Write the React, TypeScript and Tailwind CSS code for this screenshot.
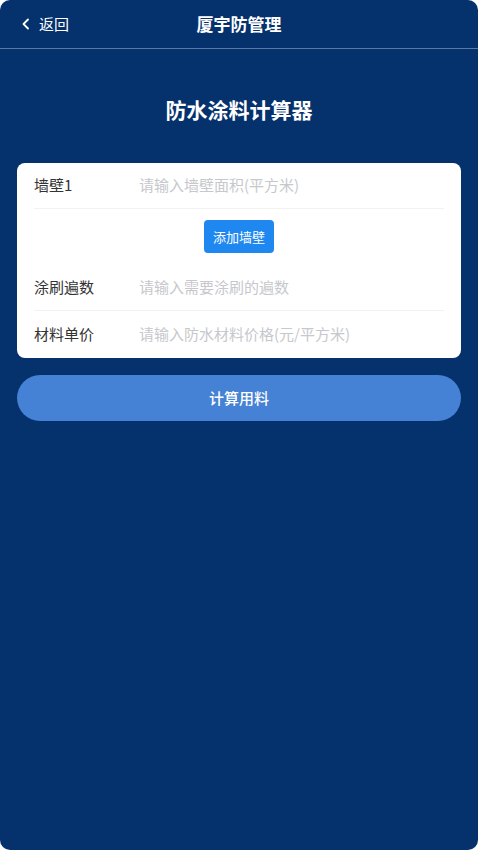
import React from "react";

const font = { fontFamily: '"Noto Sans CJK SC", "Noto Sans", sans-serif' };

function Row({ label, placeholder, divider = true }: { label: string; placeholder: string; divider?: boolean }) {
  return (
    <div className={`flex h-[46px] items-center ${divider ? "border-b border-[#f2f2f2]" : ""}`}>
      <span className="w-[105px] text-[15px] text-[#333]">{label}</span>
      <input
        className="flex-1 bg-transparent text-[15px] text-[#333] outline-none placeholder:text-[#c6c8cc]"
        placeholder={placeholder}
        style={font}
      />
    </div>
  );
}

export default function App() {
  return (
    <div className="bg-white" style={font}>
      <div className="flex h-[850px] flex-col overflow-hidden rounded-[10px] bg-[#05316c]">
        {/* header */}
        <div className="relative flex h-[49px] shrink-0 items-center justify-center border-b border-[#5679a8]">
          <button className="absolute left-[21px] top-0 flex h-full items-center gap-[8px] text-[15px] text-white">
            <svg width="10" height="12" viewBox="0 0 10 12" fill="none">
              <path d="M7 1.5 2.5 6 7 10.5" stroke="white" strokeWidth="1.8" strokeLinecap="round" strokeLinejoin="round" />
            </svg>
            返回
          </button>
          <h1 className="text-[17px] font-bold text-white">厦宇防管理</h1>
        </div>

        <div className="px-[17px]">
          <h2 className="pt-[45px] pb-[39px] text-center text-[21px] font-bold leading-[30px] text-white">防水涂料计算器</h2>

          {/* form card */}
          <div className="rounded-[8px] bg-white px-[17px] pb-[1px]">
            <Row label="墙壁1" placeholder="请输入墙壁面积(平方米)" />
            <div className="flex justify-center pt-[11px] pb-[12px]">
              <button className="h-[33px] w-[70px] rounded-[4px] bg-[#1e88f0] text-[13px] text-white">添加墙壁</button>
            </div>
            <Row label="涂刷遍数" placeholder="请输入需要涂刷的遍数" />
            <Row label="材料单价" placeholder="请输入防水材料价格(元/平方米)" divider={false} />
          </div>

          <button className="mt-[17px] h-[46px] w-full rounded-full bg-[#4581d4] text-[15px] font-medium text-white">计算用料</button>
        </div>
      </div>
    </div>
  );
}
